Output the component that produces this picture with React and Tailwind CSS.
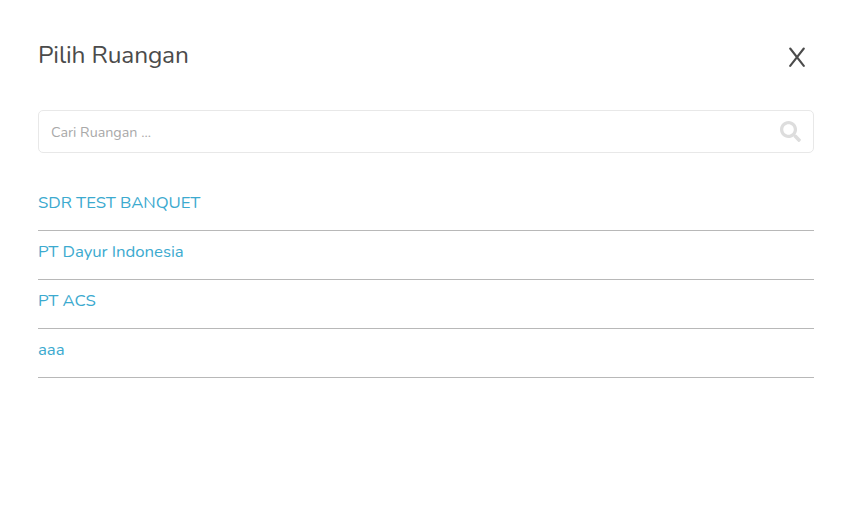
import React, { useState } from 'react';
import { FaSearch } from 'react-icons/fa';

const rooms = ['SDR TEST BANQUET', 'PT Dayur Indonesia', 'PT ACS', 'aaa'];

const RoomRow = ({ name }) => (
  <li className="h-[49px] border-b border-[#b8b8b8] pt-[9px]">
    <button type="button" className="block text-[16.8px] leading-6 tracking-[-0.06px] text-[#3caacf] cursor-pointer">
      {name}
    </button>
  </li>
);

const App = () => {
  const [search, setSearch] = useState('');

  const filteredRooms = rooms.filter(room => room.toLowerCase().includes(search.toLowerCase()));

  return (
    <div className="min-h-screen bg-white px-[38px] pt-[37px] font-['Nunito','Open_Sans',sans-serif]">
      {/* Header */}
      <div className="flex items-start justify-between pr-2">
        <h1 className="text-[24.5px] leading-9 tracking-[-0.15px] text-[#4b4b4b]">Pilih Ruangan</h1>
        <button type="button" aria-label="Tutup" className="mt-[10px] cursor-pointer text-[#4b4b4b]">
          <svg className="w-[18px] h-[20px]" viewBox="0 0 18 20" fill="none" stroke="currentColor" strokeWidth="2.1" strokeLinecap="round">
            <path d="M2.2 1.5 15.8 18.8M15.8 1.5 2.2 18.8" />
          </svg>
        </button>
      </div>

      {/* Search box */}
      <div className="mt-[37px] flex h-[43px] items-center rounded-[5px] border border-[#e8e8e8] px-3">
        <input
          type="text"
          className="min-w-0 flex-1 pt-[2px] text-[14.3px] text-[#4b4b4b] outline-none placeholder:text-[#a9a9a9]"
          placeholder="Cari Ruangan ..."
          value={search}
          onChange={(e) => setSearch(e.target.value)}
        />
        <FaSearch className="w-[21px] h-[21px] text-[#dddddd]" />
      </div>

      {/* Room list */}
      <ul className="mt-[29px]">
        {filteredRooms.map(room => (
          <RoomRow key={room} name={room} />
        ))}
      </ul>
    </div>
  );
};

export default App;
